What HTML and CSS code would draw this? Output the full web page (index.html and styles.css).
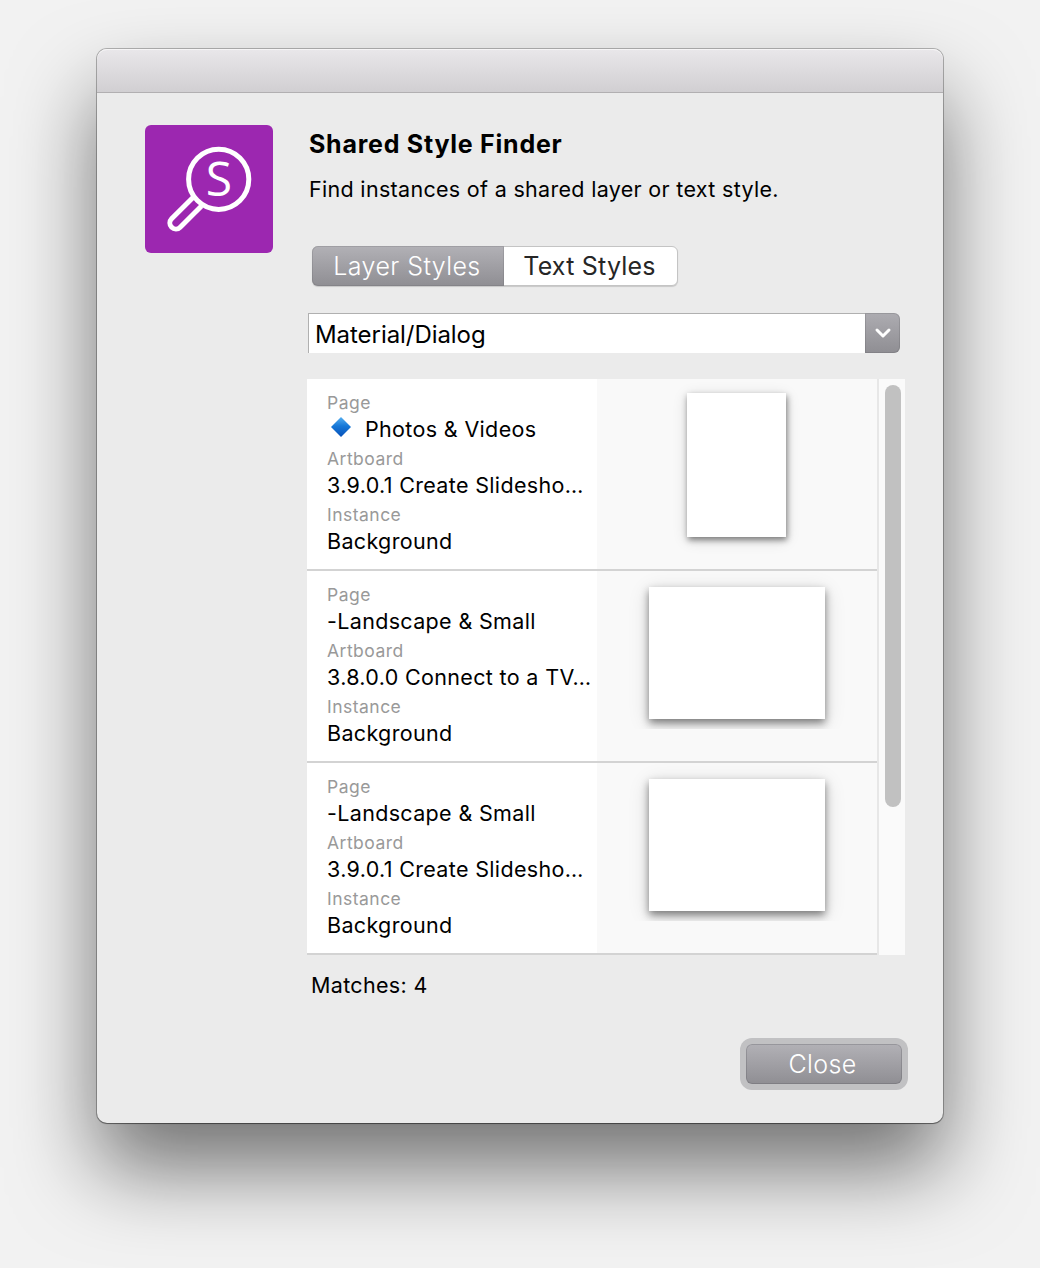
FILE: index.html
```html
<!DOCTYPE html>
<html lang="en">
<head>
<meta charset="utf-8">
<title>Shared Style Finder</title>
<link rel="stylesheet" href="styles.css">
</head>
<body>
<main class="window">
  <header class="titlebar"></header>
  <div class="content">
    <svg class="logo" viewBox="0 0 128 128" aria-hidden="true">
      <rect width="128" height="128" rx="6" fill="#9c27b0"/>
      <g fill="none" stroke="#fff" stroke-width="5">
        <circle cx="73.7" cy="54.3" r="30.1"/>
        <path d="M48 72.5 L26.6 93.7 A6 6 0 0 0 35.2 102.2 L56.5 81"/>
      </g>
      <text class="logo-letter" x="74" y="71" text-anchor="middle">S</text>
    </svg>
    <section class="panel">
      <h1 class="title">Shared Style Finder</h1>
      <p class="subtitle">Find instances of a shared layer or text style.</p>
      <div class="tabs">
        <button class="tab tab-active">Layer Styles</button>
        <button class="tab">Text Styles</button>
      </div>
      <div class="combo">
        <div class="combo-value">Material/Dialog</div>
        <button class="combo-button" aria-label="Show styles">
          <svg width="18" height="12" viewBox="0 0 18 12"><path d="M3 3 L9 9 L15 3" fill="none" stroke="#fff" stroke-width="3" stroke-linecap="round" stroke-linejoin="round"/></svg>
        </button>
      </div>
      <div class="results">
        <div class="rows">
          <article class="row">
            <dl class="info">
              <dt>Page</dt>
              <dd class="with-icon"><svg class="diamond" width="22" height="22" viewBox="0 0 22 22"><defs><linearGradient id="blue" x2="0" y2="1"><stop offset="0" stop-color="#55aef0"/><stop offset=".45" stop-color="#1678d8"/><stop offset="1" stop-color="#0750b8"/></linearGradient></defs><path d="M11 1 L21 11 L11 21 L1 11Z" fill="url(#blue)"/></svg>Photos &amp; Videos</dd>
              <dt>Artboard</dt>
              <dd>3.9.0.1 Create Slidesho…</dd>
              <dt>Instance</dt>
              <dd>Background</dd>
            </dl>
            <div class="preview"><div class="crop crop-tall"><div class="sheet sheet-tall"></div></div></div>
          </article>
          <article class="row">
            <dl class="info">
              <dt>Page</dt>
              <dd>-Landscape &amp; Small</dd>
              <dt>Artboard</dt>
              <dd>3.8.0.0 Connect to a TV…</dd>
              <dt>Instance</dt>
              <dd>Background</dd>
            </dl>
            <div class="preview"><div class="crop"><div class="sheet"></div></div></div>
          </article>
          <article class="row">
            <dl class="info">
              <dt>Page</dt>
              <dd>-Landscape &amp; Small</dd>
              <dt>Artboard</dt>
              <dd>3.9.0.1 Create Slidesho…</dd>
              <dt>Instance</dt>
              <dd>Background</dd>
            </dl>
            <div class="preview"><div class="crop"><div class="sheet"></div></div></div>
          </article>
        </div>
        <div class="scrollbar"><div class="thumb"></div></div>
      </div>
      <p class="matches">Matches: 4</p>
      <div class="actions"><button class="close">Close</button></div>
    </section>
  </div>
</main>
</body>
</html>
```

FILE: styles.css
```css
* { box-sizing: border-box; }
body {
  margin: 0;
  height: 1268px;
  padding: 49px 97px;
  overflow: hidden;
  background: #f2f2f2;
  color: #000;
  font-family: Inter, "Liberation Sans", sans-serif;
}
h1, p, dl, dd { margin: 0; }
button { border: 0; padding: 0; font: inherit; color: inherit; background: none; letter-spacing: inherit; }

.window {
  width: 846px;
  height: 1074px;
  border-radius: 10px;
  background: #ebebeb;
  box-shadow: 0 0 0 1px rgba(0, 0, 0, .26), 0 1px 1px rgba(0, 0, 0, .3), 0 46px 84px rgba(0, 0, 0, .53);
}
.titlebar {
  height: 44px;
  border-radius: 10px 10px 0 0;
  border-bottom: 1px solid #b1afb1;
  background: linear-gradient(#e9e7ea, #d1cfd2);
  box-shadow: inset 0 1px #f6f5f6;
}
.content { display: flex; padding: 32px 0 0 48px; }
.logo { width: 128px; height: 128px; flex: none; }
.logo-letter { font: 48px "Open Sans", sans-serif; fill: #fff; }
.panel { width: 602px; margin-left: 34px; display: flex; flex-direction: column; }
.title { font-size: 25px; line-height: 38px; padding-left: 2px; font-weight: 700; letter-spacing: .75px; }
.subtitle { font-size: 21.5px; line-height: 30px; margin-top: 11px; padding-left: 2px; letter-spacing: .31px; }

.tabs {
  display: flex;
  width: 366px;
  height: 40px;
  margin: 42px 0 0 5px;
  border-radius: 6px;
  background: #fff;
  border: 1px solid #c4c4c4;
  box-shadow: 0 1px 1px rgba(0, 0, 0, .15);
  font-size: 25px;
  letter-spacing: .2px;
  color: #262626;
}
.tab { flex: 1; line-height: 38px; text-align: center; padding-right: 2px; }
.tab-active {
  flex: none;
  width: 192px;
  height: 40px;
  margin: -1px 0 -1px -1px;
  border-radius: 6px 0 0 6px;
  background: linear-gradient(#b2b1b6, #8f8e93);
  box-shadow: inset 0 0 0 1px rgba(90, 90, 95, .2);
  color: #fff;
  font-weight: 300;
  letter-spacing: .42px;
}

.combo { display: flex; height: 40px; width: 592px; margin: 27px 0 0 1px; }
.combo-value {
  flex: 1;
  border: 1px solid #b0b0b0;
  border-width: 1px 0 0 1px;
  background: #fff;
  padding-left: 6px;
  font-size: 24px;
  line-height: 42px;
  letter-spacing: -.06px;
}
.combo-button {
  width: 35px;
  display: flex;
  align-items: center;
  justify-content: center;
  border-radius: 0 6px 6px 0;
  background: linear-gradient(#adacb1, #8f8e93);
  box-shadow: inset 0 0 0 1px rgba(90, 90, 95, .25);
}

.results { display: flex; width: 598px; height: 576px; margin-top: 26px; }
.rows { width: 572px; border-right: 2px solid #e7e7e7; }
.row { display: flex; height: 192px; border-bottom: 2px solid #d3d3d3; background: #f9f9f9; }
.info { width: 290px; height: 190px; background: #fff; padding: 12px 0 0 20px; }
.info dt { height: 24px; line-height: 24px; font-size: 17.5px; letter-spacing: .48px; color: #999; }
.info dd { height: 32px; line-height: 29px; font-size: 21.5px; letter-spacing: .34px; white-space: nowrap; }
.with-icon { display: flex; }
.diamond { margin: 1px 13px 0 3px; }
.preview { flex: 1; }
.crop { height: 158px; padding: 16px 0 0 52px; overflow: hidden; }
.crop-tall { height: 180px; padding: 14px 0 0 90px; }
.sheet {
  width: 176px;
  height: 132px;
  background: #fff;
  box-shadow: 0 4px 8px rgba(0, 0, 0, .46), 0 4px 20px rgba(0, 0, 0, .14);
}
.sheet-tall {
  width: 99px;
  height: 144px;
  box-shadow: 1px 3px 6px rgba(0, 0, 0, .46), 0 3px 14px rgba(0, 0, 0, .14);
}
.scrollbar { width: 26px; padding: 6px 0 0 6px; background: #fafafa; }
.thumb { width: 16px; height: 422px; border-radius: 8px; background: #c1c1c1; }

.matches { font-size: 21.5px; line-height: 30px; margin-top: 15px; padding-left: 4px; letter-spacing: .33px; }
.actions { display: flex; justify-content: flex-end; margin-top: 44px; padding-right: 7px; }
.close {
  width: 156px;
  height: 40px;
  padding-right: 3px;
  border-radius: 6px;
  background: linear-gradient(#b2b1b6, #8f8e93);
  box-shadow: inset 0 0 0 1px rgba(90, 90, 95, .3), 0 0 0 6px #c1c1c3;
  color: #fff;
  font-size: 25px;
  font-weight: 300;
  letter-spacing: .4px;
  line-height: 40px;
}
```
